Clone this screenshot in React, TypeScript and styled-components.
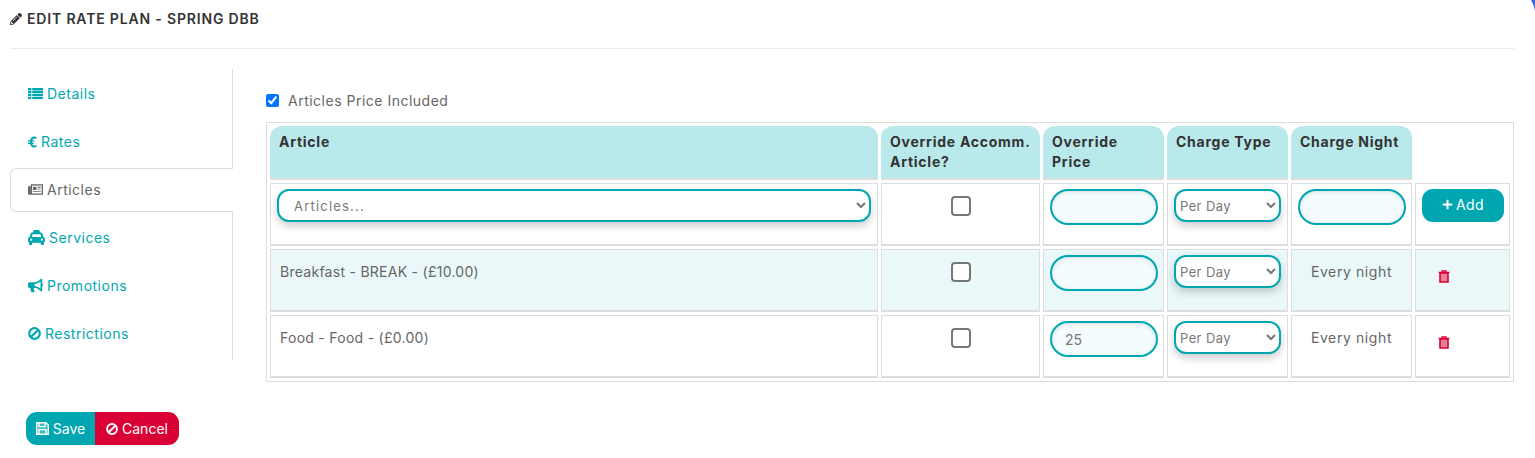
import React from 'react';
import styled, { createGlobalStyle } from 'styled-components';
import { FaBullhorn, FaPencilAlt, FaPlus, FaTaxi } from 'react-icons/fa';

const teal = '#00a7b1';
const crimson = '#d90036';

const GlobalStyle = createGlobalStyle`
  html, body {
    margin: 0;
    background: #fff;
  }
  body {
    font-family: Inter, "Liberation Sans", sans-serif;
    color: #666;
    overflow: hidden;
  }
  * {
    box-sizing: border-box;
  }
`;

const Page = styled.div`
  position: relative;
  width: 1535px;
  height: 458px;
  padding: 0 21px 0 10px;
`;

const CornerMark = styled.svg`
  position: absolute;
  top: 0;
  right: 0;
`;

const Title = styled.h1`
  display: flex;
  align-items: center;
  gap: 5px;
  height: 49px;
  margin: 0;
  padding-bottom: 11px;
  border-bottom: 1px solid #ececec;
  color: #333;
  font-size: 14px;
  font-weight: 600;
  letter-spacing: 0.83px;
  text-transform: uppercase;
`;

const Body = styled.div`
  display: flex;
  margin-top: 20px;
`;

const Nav = styled.nav`
  display: flex;
  flex-direction: column;
  width: 223px;
  height: 291px;
  padding-top: 3px;
  border-right: 1px solid #ddd;
`;

const Tab = styled.a<{ $active?: boolean }>`
  display: flex;
  align-items: center;
  gap: 4px;
  flex: none;
  height: 44px;
  margin-bottom: 4px;
  margin-right: ${p => (p.$active ? '-1px' : '0')};
  padding: 0 0 1px 17px;
  background: #fff;
  border: 1px solid ${p => (p.$active ? '#ddd' : 'transparent')};
  border-right: 0;
  border-radius: 6px 0 0 6px;
  color: ${p => (p.$active ? '#666' : teal)};
  font-size: 14px;
  letter-spacing: 0.5px;
`;

const Content = styled.section`
  flex: 1;
  padding: 24px 0 0 33px;
`;

const IncludedLabel = styled.label`
  display: flex;
  align-items: center;
  gap: 9px;
  height: 16px;
  margin-bottom: 13px;
  padding-bottom: 1px;
  font-size: 14px;
  letter-spacing: 0.5px;
`;

const IncludedCheck = styled.input`
  width: 13px;
  height: 13px;
  margin: 0;
`;

const ArticlesTable = styled.table`
  width: 1248px;
  table-layout: fixed;
  border: 1px solid #ddd;
  border-collapse: separate;
  border-spacing: 3px;
`;

const HeadCell = styled.th<{ $width: number; $empty?: boolean }>`
  width: ${p => p.$width}px;
  height: 54px;
  padding: 6px 9px;
  background: ${p => (p.$empty ? 'transparent' : '#b9e9eb')};
  border-bottom: 2px solid ${p => (p.$empty ? 'transparent' : '#ddd')};
  border-radius: 12px 12px 0 0;
  color: #333;
  font-size: 14px;
  font-weight: 700;
  letter-spacing: 0.75px;
  line-height: 20px;
  text-align: left;
  vertical-align: top;
`;

const Row = styled.tr<{ $tinted?: boolean }>`
  background: ${p => (p.$tinted ? '#eaf8f9' : '#fff')};
`;

const Cell = styled.td<{ $center?: boolean }>`
  height: 63px;
  padding: 5px 6px;
  border: 1px solid #ddd;
  border-bottom-width: 2px;
  font-size: 14px;
  text-align: ${p => (p.$center ? 'center' : 'left')};
  vertical-align: top;
`;

const TextCell = styled(Cell)`
  padding: 12px 9px;
  line-height: 20px;
  letter-spacing: ${p => (p.$center ? '0.6px' : '0.27px')};
`;

const Select = styled.select<{ $wide?: boolean }>`
  display: block;
  width: 100%;
  height: 33px;
  padding: 0 ${p => (p.$wide ? '11px' : '0')};
  background-color: #fff;
  border: 2px solid ${teal};
  border-radius: 12px;
  box-shadow: 0 4px 8px rgba(0, 0, 0, 0.2);
  color: #777;
  font-family: inherit;
  font-size: 13px;
  letter-spacing: ${p => (p.$wide ? '1.2px' : '0.4px')};
`;

const PriceInput = styled.input`
  display: block;
  width: 108px;
  height: 36px;
  padding: 0 20px 0 13px;
  background: #f4fcfe;
  border: 2px solid ${teal};
  border-radius: 18px;
  box-shadow: inset 0 1px 4px rgba(0, 0, 0, 0.12);
  color: #777;
  font-family: inherit;
  font-size: 14px;
  outline: none;
`;

const RowCheck = styled.input`
  display: block;
  width: 20px;
  height: 20px;
  margin: 7px auto 0;
  appearance: none;
  background: #fff;
  border: 2px solid #777;
  border-radius: 4px;
`;

const AddButton = styled.button`
  display: flex;
  align-items: center;
  justify-content: center;
  gap: 3px;
  width: 82px;
  height: 33px;
  padding: 0 0 2px;
  background: ${teal};
  border: 0;
  border-radius: 11px;
  color: #fff;
  font-family: inherit;
  font-size: 14px;
  letter-spacing: 0.4px;
`;

const TrashButton = styled.button`
  display: block;
  margin: 15px 0 0 16px;
  padding: 0;
  background: none;
  border: 0;
  line-height: 0;
`;

const Footer = styled.div`
  display: flex;
  margin: 30px 0 0 16px;
`;

const ActionButton = styled.button<{ $danger?: boolean }>`
  display: flex;
  align-items: center;
  justify-content: center;
  gap: 4px;
  width: ${p => (p.$danger ? '84px' : '69px')};
  height: 33px;
  padding: 0;
  background: ${p => (p.$danger ? crimson : teal)};
  border: 0;
  border-radius: ${p => (p.$danger ? '0 11px 11px 0' : '11px 0 0 11px')};
  color: #fff;
  font-family: inherit;
  font-size: 14px;
`;

const ListIcon = () => (
  <svg width="15" height="11" viewBox="0 0 15 11" aria-hidden="true">
    <path d="M0 0h3.4v2.4H0zM4.2 0H15v2.4H4.2zM0 3.1h3.4v2.1H0zM4.2 3.1H15v2.1H4.2zM0 5.9h3.4v2.1H0zM4.2 5.9H15v2.1H4.2zM0 8.7h3.4V11H0zM4.2 8.7H15V11H4.2z" fill="currentColor" />
  </svg>
);

const EuroIcon = () => (
  <svg width="9" height="12" viewBox="0 0 9 12" aria-hidden="true">
    <path d="M8.3 2.1C7.6 1.6 6.9 1.4 6.2 1.4 4.3 1.4 3 3.4 3 6s1.3 4.6 3.2 4.6c.8 0 1.5-.3 2.2-.8" fill="none" stroke="currentColor" strokeWidth="2" />
    <path d="M0 4.2h6.4v1.4H0zM0 6.5h5.6v1.4H0z" fill="currentColor" />
  </svg>
);

const NewspaperIcon = () => (
  <svg width="15" height="11" viewBox="0 0 16 11" aria-hidden="true">
    <path d="M0 2h3v9H1a1 1 0 0 1-1-1z" fill="currentColor" />
    <path d="M3 0h13v10a1 1 0 0 1-1 1H3z" fill="currentColor" />
    <path d="M4.4 1.3h10.2v8.4H4.4z" fill="#fff" />
    <path d="M5.4 2.6h3.6v3.4H5.4zM10 2.6h3.6v1H10zM10 4.6h3.6v1H10zM5.4 7h8.2v1H5.4z" fill="currentColor" />
  </svg>
);

const BanIcon = ({ size = 12 }: { size?: number }) => (
  <svg width={size} height={size} viewBox="0 0 12 12" aria-hidden="true">
    <circle cx="6" cy="6" r="4.9" fill="none" stroke="currentColor" strokeWidth="2" />
    <path d="M2.7 9.3l6.6-6.6" stroke="currentColor" strokeWidth="2" />
  </svg>
);

const SaveIcon = () => (
  <svg width="13" height="13" viewBox="0 0 13 13" aria-hidden="true">
    <path d="M.7.7h9.2l2.4 2.4v9.2H.7z" fill="rgba(255,255,255,.25)" stroke="#fff" strokeWidth="1.4" />
    <path d="M3 1v3.6h6V1M3 12V7.6h7V12" fill="none" stroke="#fff" strokeWidth="1.3" />
  </svg>
);

const TrashIcon = () => (
  <svg width="12" height="13" viewBox="0 0 12 13" aria-hidden="true">
    <path d="M2 3h8v9H2z" fill="#e8809a" stroke={crimson} strokeWidth="1.6" />
    <path d="M.6 2.4h10.8M4 2.2V.9h4v1.3" fill="none" stroke={crimson} strokeWidth="1.3" />
  </svg>
);

const ChargeSelect = () => (
  <Select defaultValue="day">
    <option value="day">Per Day</option>
    <option value="stay">Per Stay</option>
  </Select>
);

const rows = [
  { label: 'Breakfast - BREAK - (£10.00)', price: '', tinted: true },
  { label: 'Food - Food - (£0.00)', price: '25', tinted: false },
];

const App: React.FC = () => {
  return (
    <Page>
      <GlobalStyle />
      <CornerMark width="4" height="11" viewBox="0 0 4 11" aria-hidden="true">
        <path d="M0 0h4v11C3.4 7 2 3 0 0z" fill="#3563d6" />
      </CornerMark>

      <Title>
        <FaPencilAlt size={12} />
        Edit Rate Plan - Spring DBB
      </Title>

      <Body>
        <Nav>
          <Tab><ListIcon />Details</Tab>
          <Tab><EuroIcon />Rates</Tab>
          <Tab $active><NewspaperIcon />Articles</Tab>
          <Tab><FaTaxi size={17} />Services</Tab>
          <Tab><FaBullhorn size={15} />Promotions</Tab>
          <Tab><BanIcon size={13} />Restrictions</Tab>
        </Nav>

        <Content>
          <IncludedLabel>
            <IncludedCheck type="checkbox" defaultChecked />
            Articles Price Included
          </IncludedLabel>

          <ArticlesTable>
            <thead>
              <tr>
                <HeadCell $width={608}>Article</HeadCell>
                <HeadCell $width={159}>Override Accomm. Article?</HeadCell>
                <HeadCell $width={121}>Override Price</HeadCell>
                <HeadCell $width={121}>Charge Type</HeadCell>
                <HeadCell $width={121}>Charge Night</HeadCell>
                <HeadCell $width={95} $empty />
              </tr>
            </thead>
            <tbody>
              <Row>
                <Cell>
                  <Select $wide defaultValue="">
                    <option value="">Articles...</option>
                  </Select>
                </Cell>
                <Cell><RowCheck type="checkbox" /></Cell>
                <Cell><PriceInput type="text" /></Cell>
                <Cell><ChargeSelect /></Cell>
                <Cell><PriceInput type="text" /></Cell>
                <Cell>
                  <AddButton type="button"><FaPlus size={11} />Add</AddButton>
                </Cell>
              </Row>
              {rows.map(row => (
                <Row key={row.label} $tinted={row.tinted}>
                  <TextCell>{row.label}</TextCell>
                  <Cell><RowCheck type="checkbox" /></Cell>
                  <Cell><PriceInput type="text" defaultValue={row.price} /></Cell>
                  <Cell><ChargeSelect /></Cell>
                  <TextCell $center>Every night</TextCell>
                  <Cell>
                    <TrashButton type="button" aria-label="Delete"><TrashIcon /></TrashButton>
                  </Cell>
                </Row>
              ))}
            </tbody>
          </ArticlesTable>
        </Content>
      </Body>

      <Footer>
        <ActionButton type="button"><SaveIcon />Save</ActionButton>
        <ActionButton type="button" $danger><BanIcon />Cancel</ActionButton>
      </Footer>
    </Page>
  );
};

export default App;
